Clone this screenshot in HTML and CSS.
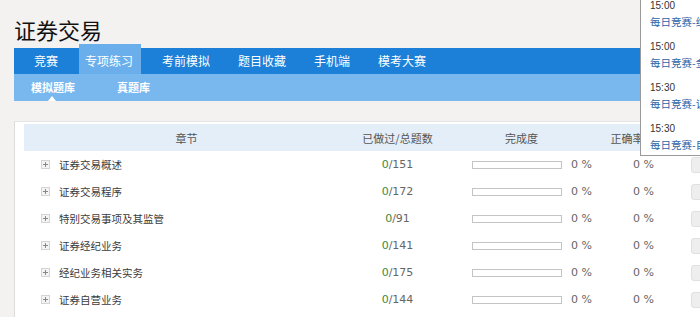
FILE: index.html
```html
<!DOCTYPE html>
<html>

<head>
    <meta charset="utf-8">
    <title>证券交易</title>

    <link rel="stylesheet" href="styles.css">
</head>

<body>

    <div class="wrapper">
        <h1 class="title">证券交易</h1>

        <div class="nav">
            <a class="nav_item">竞赛</a>
            <a class="nav_item active">专项练习</a>
            <a class="nav_item">考前模拟</a>
            <a class="nav_item">题目收藏</a>
            <a class="nav_item">手机端</a>
            <a class="nav_item">模考大赛</a>
        </div>
        <div class="sub_nav">
            <a class="sub_item current">模拟题库</a>
            <a class="sub_item">真题库</a>
        </div>

        <div class="panel">
            <div class="row head">
                <div class="col c1">章节</div>
                <div class="col c2">已做过/总题数</div>
                <div class="col c3">完成度</div>
                <div class="col c4">正确率</div>
                <div class="col c5"></div>
            </div>
            <div id="rows"></div>
        </div>
    </div>

    <div class="pop">
        <div class="pop_item">
            <div class="pop_time">15:00</div>
            <a class="pop_link">每日竞赛-综</a>
        </div>
        <div class="pop_item">
            <div class="pop_time">15:00</div>
            <a class="pop_link">每日竞赛-金</a>
        </div>
        <div class="pop_item">
            <div class="pop_time">15:30</div>
            <a class="pop_link">每日竞赛-证</a>
        </div>
        <div class="pop_item">
            <div class="pop_time">15:30</div>
            <a class="pop_link">每日竞赛-目</a>
        </div>
    </div>

    <script>
        const chapters = [
            ['证券交易概述', 151],
            ['证券交易程序', 172],
            ['特别交易事项及其监管', 91],
            ['证券经纪业务', 141],
            ['经纪业务相关实务', 175],
            ['证券自营业务', 144]
        ];

        let rows = document.getElementById('rows');
        for (let i = 0; i < chapters.length; i++) {
            let row = document.createElement('div');
            row.classList.add('row');
            row.innerHTML =
                '<div class="col c1"><span class="plus"></span>' + chapters[i][0] + '</div>' +
                '<div class="col c2 num"><span class="done">0</span>/' + chapters[i][1] + '</div>' +
                '<div class="col c3"><span class="bar"></span><span class="num">0 %</span></div>' +
                '<div class="col c4 num">0 %</div>' +
                '<div class="col c5"><span class="btn"></span></div>';
            rows.appendChild(row);
        }
    </script>
</body>

</html>
```

FILE: styles.css
```css
* {
    box-sizing: border-box;
}

body {
    margin: 0;
    background-color: #f4f2f1;
    font-family: "Noto Sans CJK SC", sans-serif;
    overflow: hidden;
}

.wrapper {
    width: 700px;
    height: 317px;
    padding-left: 14px;
    overflow: hidden;
}

.title {
    margin: 0;
    height: 44px;
    padding-top: 14px;
    font-size: 22px;
    line-height: 30px;
    font-weight: normal;
    color: #111;
}

.nav {
    display: flex;
    align-items: flex-end;
    gap: 14px;
    height: 26px;
    margin-top: 4px;
    padding-left: 13px;
    background-color: #1c7fd8;
}

.nav_item {
    height: 26px;
    padding: 0 7px;
    font-size: 12px;
    line-height: 26px;
    color: #fff;
}

.nav_item.active {
    height: 30px;
    margin-top: -4px;
    padding: 4px 8px 0 6px;
    background-color: #6aafec;
}

.sub_nav {
    display: flex;
    gap: 42px;
    height: 27px;
    padding-left: 17px;
    background-color: #79b8ef;
}

.sub_item {
    position: relative;
    font-size: 11px;
    line-height: 27px;
    font-weight: bold;
    color: #fff;
}

.sub_item.current::after {
    content: "";
    position: absolute;
    left: 17px;
    bottom: 0;
    border: 4px solid transparent;
    border-bottom: 5px solid #fff;
    border-top: none;
}

.panel {
    margin-top: 20px;
    height: 196px;
    padding: 2px 0 0 9px;
    background-color: #fff;
    border-left: 1px solid #dcdcdc;
    border-top: 1px solid #e6e6e6;
}

.row {
    display: flex;
    height: 27px;
    align-items: center;
    font-size: 10.5px;
    color: #3c3c3c;
}

.row.head {
    background-color: #e3eef9;
    font-size: 11px;
    color: #555;
}

.col {
    flex: none;
}

.c1 {
    width: 325px;
    padding-left: 17px;
    display: flex;
    align-items: center;
}

.head .c1,
.head .c2,
.head .c3,
.head .c4 {
    display: block;
    padding: 0;
    text-align: center;
}

.c2 {
    width: 97px;
    text-align: center;
}

.c3 {
    width: 151px;
    padding-left: 26px;
    display: flex;
    align-items: center;
}

.c4 {
    width: 60px;
    padding-left: 36px;
}

.c5 {
    width: 80px;
    padding-left: 34px;
}

.num {
    font-family: "DejaVu Sans", sans-serif;
    font-size: 11px;
    color: #666;
}

.done {
    color: #3c8a3c;
}

.plus {
    position: relative;
    width: 9px;
    height: 9px;
    margin-right: 9px;
    border: 1px solid #d4d4d4;
    background-color: #f4f4f4;
}

.plus::before,
.plus::after {
    content: "";
    position: absolute;
    background-color: #888;
}

.plus::before {
    left: 1px;
    top: 3px;
    width: 5px;
    height: 1px;
}

.plus::after {
    left: 3px;
    top: 1px;
    width: 1px;
    height: 5px;
}

.bar {
    width: 90px;
    height: 8px;
    margin-right: 9px;
    border: 1px solid #c4c4c4;
    background-color: #fff;
}

.btn {
    display: block;
    width: 40px;
    height: 16px;
    border: 1px solid #e0e0e0;
    border-radius: 3px;
    background-color: #eeeeee;
}

.pop {
    position: absolute;
    top: 0;
    left: 640px;
    width: 60px;
    height: 156px;
    padding-left: 9px;
    overflow: hidden;
    background-color: #fff;
    border-left: 1px solid #9a9a9a;
    border-bottom: 1px solid #9a9a9a;
    white-space: nowrap;
}

.pop_item {
    height: 41px;
}

.pop_time {
    font-family: "Liberation Sans", sans-serif;
    font-size: 10px;
    line-height: 12px;
    color: #333;
}

.pop_link {
    display: block;
    margin-top: 4px;
    font-size: 10.5px;
    line-height: 12px;
    color: #2b64a8;
}
```
